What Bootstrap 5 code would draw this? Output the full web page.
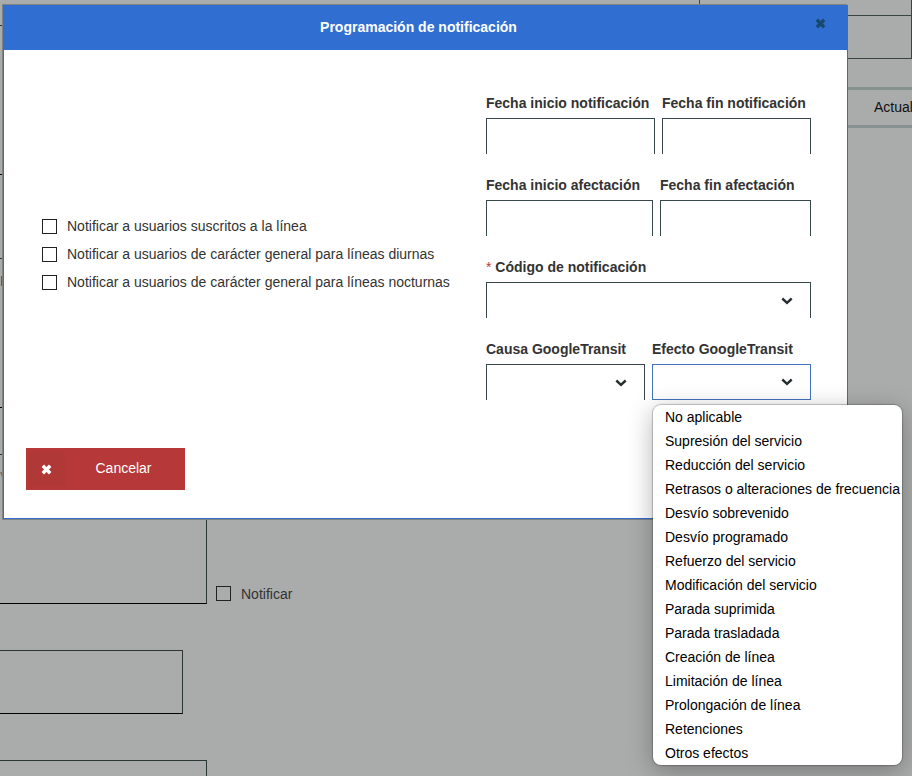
<!DOCTYPE html>
<html lang="es">
<head>
<meta charset="utf-8">
<meta name="viewport" content="width=device-width, initial-scale=1">
<title>Programación de notificación</title>
<link href="https://cdn.jsdelivr.net/npm/bootstrap@5.3.0/dist/css/bootstrap.min.css" rel="stylesheet">
<style>
body { font: 14px/20px "Liberation Sans", Arial, sans-serif; color: #333; background: #aaacab; }

/* Dimmed page under the dialog */
.page-form { margin-left: -12px; padding-top: 25px; }
.page-form textarea, .page-form .page-box { display: block; width: 219px; height: 150px; padding: 12px 11px; border: 1px solid #2c3636; border-bottom-color: #000; background: transparent; resize: none; overflow: hidden; }
.page-form .page-box a { color: #264a6e; }
.page-form textarea.short-area { width: 195px; height: 64px; }
.page-form textarea.version-area { padding: 11px 72px; }
.page-form textarea::placeholder { color: #666; }
.gap-large { margin-bottom: 83px; }
.gap-base { margin-bottom: 46px; }
.page-tick { margin-left: 9px; }
.page-side { width: 213px; }
.side-grid { border: 1px solid #3a4444; border-top: 0; height: 59px; margin-bottom: 28px; }
.side-grid div { height: 16px; border-bottom: 1px solid #3a4444; }
.side-bar { border: solid #879190; border-width: 3px 0; height: 41px; padding-left: 175px; }
.side-bar button { color: #111; line-height: 35px; }

/* Square tick boxes */
.tick-line { height: 28px; }
.tick-line .form-check-input { width: 15px; height: 15px; margin: 0; border: 1px solid #222; border-radius: 0; background-color: transparent; }
.tick-line .form-check-input:checked { background-color: #306fd1; }
.tick-line label { padding: 0 0 2px 10px; }
.page-tick label { padding: 1px 0 0 10px; }
.page-tick.tick-line label { padding-bottom: 0; }

/* Dialog */
.dialog-layer { top: 5px; left: 3px; right: 64px; }
.dialog-box { background: #fff; border: 1px solid #306fd1; box-shadow: -1px -1px 0 #7f8381, -1px 1px 0 #7f8381; }
.dialog-head { height: 44px; padding: 0 14px 2px 0; background: #306fd1; color: #fff; }
.dialog-head h1 { font-size: 14px; line-height: 20px; }
.dialog-close { top: 12px; right: 21px; line-height: 0; }
.dialog-main { padding: 43px 36px 0 38px; }
.dialog-checks { padding-top: 16px; }
.dialog-fields { width: 325px; row-gap: 21px; }
.field-pair { display: grid; column-gap: 7px; grid-template-columns: 1fr 1fr; }
.pair-notice { grid-template-columns: 169fr 149fr; }
.pair-effect { grid-template-columns: 167fr 151fr; }
.dialog-fields label { display: block; font-weight: bold; line-height: 21px; margin-bottom: 4px; white-space: nowrap; }
.dialog-fields .required-star { color: #c03a3a; }
.dialog-fields .form-control, .dialog-fields .form-select { height: 36px; font-size: 14px; border: 1px solid #37474a; border-bottom: 0; border-radius: 0; box-shadow: none; }
.dialog-fields .form-select {
  background-image: url("data:image/svg+xml,%3Csvg xmlns='http://www.w3.org/2000/svg' viewBox='0 0 12 8'%3E%3Cpath d='M1.3 1.5 6 5.8 10.7 1.5' fill='none' stroke='%23262e30' stroke-width='2.4'/%3E%3C/svg%3E");
  background-size: 12px 8px; background-position: right 17px center; }
.dialog-fields .form-select.is-open { border: 1px solid #4474bd; }
.dialog-foot { padding: 48px 22px 28px; }
.btn-cancel { width: 159px; height: 42px; padding: 3px; background: #b63838; color: #fff; font-size: 14px; border-radius: 0; border: 0; }
.btn-cancel:hover { background: #a83333; color: #fff; }
.btn-cancel .icon-cell { width: 36px; height: 36px; padding-right: 2px; background: #b03938; }
.btn-cancel .btn-text { padding-bottom: 2px; }

/* Open option list */
.option-list { top: 100%; left: 1px; margin-top: 5px; width: 249px; border-radius: 8px; background: #fff; box-shadow: 0 0 1px 1px rgba(0,0,0,.22), 0 6px 26px rgba(0,0,0,.3); z-index: 5; overflow: hidden; }
.option-list li { padding-left: 12px; line-height: 24px; color: #000; white-space: nowrap; }
.option-list li:hover { background: #e8eef8; }
</style>
<script src="https://cdn.jsdelivr.net/npm/bootstrap@5.3.0/dist/js/bootstrap.bundle.min.js"></script>
</head>
<body>
<div class="position-relative vh-100 overflow-hidden">
  <div class="d-flex justify-content-between align-items-start">
    <div class="page-form">
      <textarea class="gap-large" aria-label="Descripción"></textarea>
      <div class="page-box gap-base"><a href="#" class="text-decoration-none">Plantilla</a></div>
      <div class="d-flex align-items-end gap-base">
        <textarea placeholder="Vista previa" aria-label="Texto de la incidencia"></textarea>
        <div class="tick-line page-tick d-flex align-items-end">
          <span class="d-flex align-items-center">
            <input class="form-check-input" type="checkbox" id="avisar"><label for="avisar">Notificar</label>
          </span>
        </div>
      </div>
      <textarea class="short-area gap-base" aria-label="Observaciones"></textarea>
      <textarea class="version-area" aria-label="Versión">Versión</textarea>
    </div>
    <div class="page-side">
      <div class="side-grid"><div></div></div>
      <div class="side-bar overflow-hidden"><button type="button" class="border-0 bg-transparent p-0">Actual</button></div>
    </div>
  </div>

  <div class="dialog-layer position-absolute" role="dialog" aria-modal="true" aria-labelledby="dialogTitle">
    <div class="dialog-box">
      <div class="dialog-head position-relative d-flex align-items-center justify-content-center">
        <h1 class="m-0 fw-bold" id="dialogTitle">Programación de notificación</h1>
        <button type="button" class="dialog-close position-absolute border-0 bg-transparent p-0" aria-label="Cerrar">
          <svg width="11" height="11" viewBox="0 0 11 11"><path d="M1.8 1.8 9.2 9.2M9.2 1.8 1.8 9.2" stroke="#17496f" stroke-width="3.4"/></svg>
        </button>
      </div>
      <form>
        <div class="dialog-main d-flex align-items-center justify-content-between">
          <div class="dialog-checks">
            <div class="tick-line d-flex align-items-center"><input class="form-check-input" type="checkbox" id="c1"><label for="c1">Notificar a usuarios suscritos a la línea</label></div>
            <div class="tick-line d-flex align-items-center"><input class="form-check-input" type="checkbox" id="c2"><label for="c2">Notificar a usuarios de carácter general para líneas diurnas</label></div>
            <div class="tick-line d-flex align-items-center"><input class="form-check-input" type="checkbox" id="c3"><label for="c3">Notificar a usuarios de carácter general para líneas nocturnas</label></div>
          </div>
          <div class="dialog-fields d-grid flex-shrink-0">
            <div class="field-pair pair-notice">
              <div><label for="f1">Fecha inicio notificación</label><input class="form-control" type="text" id="f1"></div>
              <div><label for="f2">Fecha fin notificación</label><input class="form-control" type="text" id="f2"></div>
            </div>
            <div class="field-pair pair-effect">
              <div><label for="f3">Fecha inicio afectación</label><input class="form-control" type="text" id="f3"></div>
              <div><label for="f4">Fecha fin afectación</label><input class="form-control" type="text" id="f4"></div>
            </div>
            <div>
              <label for="f5"><span class="fw-normal required-star">*</span> Código de notificación</label>
              <select class="form-select" id="f5"><option></option></select>
            </div>
            <div class="field-pair">
              <div><label for="f6">Causa GoogleTransit</label><select class="form-select" id="f6"><option></option></select></div>
              <div class="position-relative">
                <label for="f7">Efecto GoogleTransit</label><select class="form-select is-open" id="f7"><option></option></select>
                <ul class="option-list position-absolute list-unstyled mb-0" role="listbox" aria-label="Efecto GoogleTransit">
                  <li role="option">No aplicable</li>
                  <li role="option">Supresión del servicio</li>
                  <li role="option">Reducción del servicio</li>
                  <li role="option">Retrasos o alteraciones de frecuencia</li>
                  <li role="option">Desvío sobrevenido</li>
                  <li role="option">Desvío programado</li>
                  <li role="option">Refuerzo del servicio</li>
                  <li role="option">Modificación del servicio</li>
                  <li role="option">Parada suprimida</li>
                  <li role="option">Parada trasladada</li>
                  <li role="option">Creación de línea</li>
                  <li role="option">Limitación de línea</li>
                  <li role="option">Prolongación de línea</li>
                  <li role="option">Retenciones</li>
                  <li role="option">Otros efectos</li>
                </ul>
              </div>
            </div>
          </div>
        </div>
        <div class="dialog-foot">
          <button type="button" class="btn btn-cancel d-flex align-items-center">
            <span class="icon-cell d-flex align-items-center justify-content-center flex-shrink-0">
              <svg width="11" height="11" viewBox="0 0 11 11"><path d="M1.8 1.8 9.2 9.2M9.2 1.8 1.8 9.2" stroke="#fff" stroke-width="3.4"/></svg>
            </span>
            <span class="btn-text flex-grow-1 text-center">Cancelar</span>
          </button>
        </div>
      </form>
    </div>
  </div>
</div>
</body>
</html>
